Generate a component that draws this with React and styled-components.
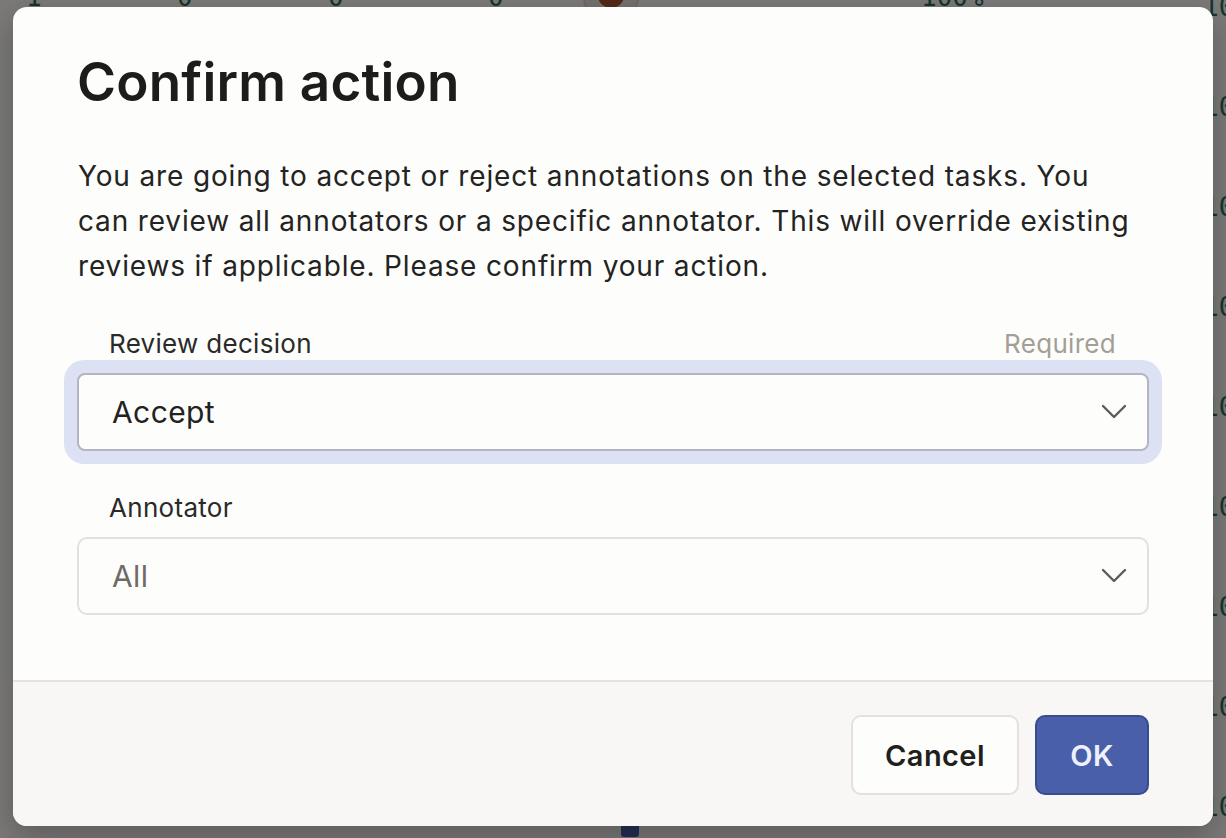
import React from "react";
import styled, { createGlobalStyle } from "styled-components";

const GlobalStyle = createGlobalStyle`
  html, body { margin: 0; padding: 0; }
  body {
    font-family: Inter, "Noto Sans", "Liberation Sans", sans-serif;
    background: #f6f5f3;
    overflow: hidden;
  }
  * { box-sizing: border-box; }
`;

const Page = styled.div`
  position: relative;
  width: 1226px;
  height: 838px;
  overflow: hidden;
  background: #f6f5f3;
`;

const Table = styled.div`
  display: flex;
  flex-direction: column;
  margin-top: -53px;
`;

const Row = styled.div`
  display: grid;
  grid-template-columns: 151px 151px 160px 95px 338px 282px 50px;
  align-items: center;
  height: 100px;
  padding-left: 26px;
  font-family: "DejaVu Sans Mono", "Liberation Mono", monospace;
  font-size: 26px;
  color: #2d6a5a;
`;

const Cell = styled.div`
  white-space: nowrap;
  padding-top: ${(p) => p.$drop || "0px"};
`;

const Avatar = styled.div`
  position: relative;
  width: 56px;
  height: 56px;
  border-radius: 50%;
  border: 2px solid #d8d4cf;
  background: radial-gradient(circle at 50% 45%, #a4532f 0 34%, #e8e2da 36%);
`;

const Badge = styled.span`
  position: absolute;
  right: -2px;
  bottom: -14px;
  width: 18px;
  height: 18px;
  border-radius: 3px;
  background: #4a5fa9;
`;

const Overlay = styled.div`
  position: absolute;
  inset: 0;
  background: rgba(0, 0, 0, 0.5);
  display: flex;
  justify-content: center;
  align-items: flex-start;
  padding-top: 7px;
`;

const Modal = styled.div`
  width: 1200px;
  background: #fdfdfc;
  border-radius: 14px;
  overflow: hidden;
  box-shadow: 0 12px 32px rgba(0, 0, 0, 0.25);
  display: flex;
  flex-direction: column;
`;

const Body = styled.div`
  padding: 43px 64px 65px 64px;
  display: flex;
  flex-direction: column;
`;

const Title = styled.h1`
  margin: 0 0 40px 0;
  font-size: 53px;
  font-weight: 600;
  letter-spacing: 0.2px;
  line-height: 1.21;
  color: #1c1c1b;
`;

const Text = styled.p`
  margin: 0 0 38px 1px;
  font-size: 28px;
  letter-spacing: 0.85px;
  line-height: 45px;
  color: #232322;
`;

const Field = styled.div`
  display: flex;
  flex-direction: column;
  margin-bottom: ${(p) => p.$mb || "0px"};
`;

const LabelRow = styled.div`
  display: flex;
  justify-content: space-between;
  align-items: baseline;
  padding: 0 33px 0 32px;
  margin-bottom: ${(p) => p.$gap};
`;

const Label = styled.span`
  font-size: 26px;
  letter-spacing: 0.3px;
  line-height: 34px;
  color: #2a2a29;
`;

const Hint = styled.span`
  font-size: 26px;
  letter-spacing: 0.3px;
  line-height: 34px;
  color: #a39f95;
`;

const Select = styled.div`
  height: 78px;
  display: flex;
  align-items: center;
  justify-content: space-between;
  padding: 0 20px 0 33px;
  border-radius: ${(p) => (p.$focused ? "8px" : "10px")};
  border: 2px solid ${(p) => (p.$focused ? "#b3b5c6" : "#e4e1db")};
  background: #fdfdfc;
  box-shadow: ${(p) => (p.$focused ? "0 0 0 13px #dde1f4" : "none")};
`;

const Value = styled.span`
  font-size: 30px;
  letter-spacing: 0.4px;
  color: ${(p) => (p.$muted ? "#6f6b64" : "#222221")};
`;

const Footer = styled.div`
  border-top: 2px solid #e6e3de;
  background: #f8f7f5;
  padding: 33px 64px 31px;
  display: flex;
  justify-content: flex-end;
  gap: 16px;
`;

const Button = styled.button`
  height: 80px;
  padding: 0 24px;
  min-width: ${(p) => (p.$primary ? "114px" : "168px")};
  border-radius: 10px;
  font-family: inherit;
  font-size: 29px;
  letter-spacing: 0.4px;
  font-weight: 600;
  cursor: pointer;
  border: 2px solid ${(p) => (p.$primary ? "#3a4b8e" : "#e4e1db")};
  background: ${(p) => (p.$primary ? "#4a5fa9" : "#fdfdfc")};
  color: ${(p) => (p.$primary ? "#eef1fb" : "#1f1f1e")};
`;

const Chevron = () => (
  <svg width="26" height="16" viewBox="0 0 26 16" fill="none">
    <polyline
      points="2,2 13,13 24,2"
      stroke="#5f5b55"
      strokeWidth="2.4"
      strokeLinecap="round"
      strokeLinejoin="round"
    />
  </svg>
);

const rows = Array.from({ length: 10 }, (_, i) => i);

export default function App() {
  return (
    <Page>
      <GlobalStyle />
      <Table>
        {rows.map((i) => (
          <Row key={i}>
            <Cell>{i + 1}</Cell>
            <Cell>0</Cell>
            <Cell>0</Cell>
            <Cell>0</Cell>
            <Avatar>{i > 0 && <Badge />}</Avatar>
            <Cell>100%</Cell>
            <Cell $drop="20px">100</Cell>
          </Row>
        ))}
      </Table>
      <Overlay>
        <Modal>
          <Body>
            <Title>Confirm action</Title>
            <Text>
              You are going to accept or reject annotations on the selected tasks. You
              can review all annotators or a specific annotator. This will override existing
              reviews if applicable. Please confirm your action.
            </Text>
            <Field $mb="40px">
              <LabelRow $gap="12px">
                <Label>Review decision</Label>
                <Hint>Required</Hint>
              </LabelRow>
              <Select $focused>
                <Value>Accept</Value>
                <Chevron />
              </Select>
            </Field>
            <Field>
              <LabelRow $gap="12px">
                <Label>Annotator</Label>
              </LabelRow>
              <Select>
                <Value $muted>All</Value>
                <Chevron />
              </Select>
            </Field>
          </Body>
          <Footer>
            <Button>Cancel</Button>
            <Button $primary>OK</Button>
          </Footer>
        </Modal>
      </Overlay>
    </Page>
  );
}
